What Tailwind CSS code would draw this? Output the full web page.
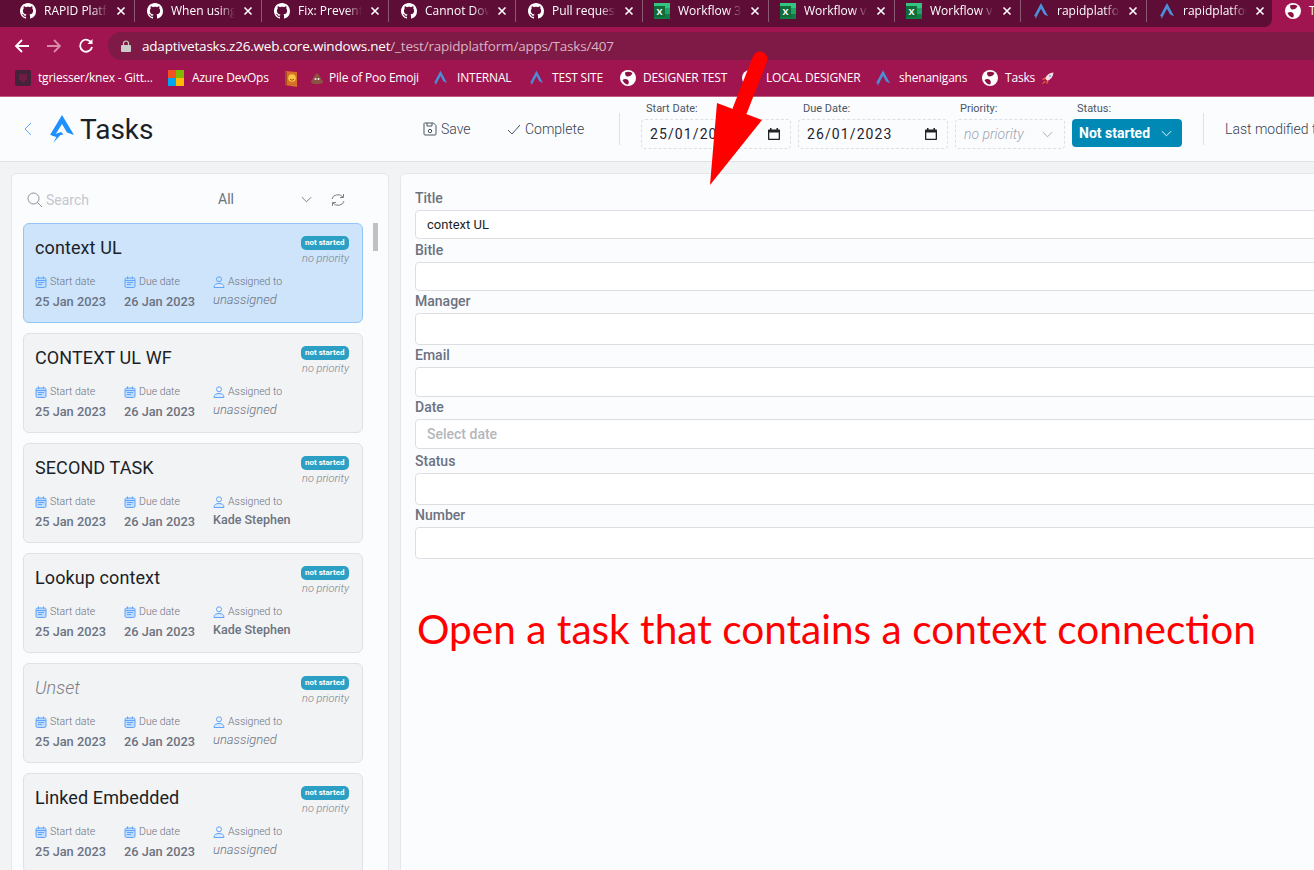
<!DOCTYPE html>
<html lang="en">
<head>
    <meta charset="UTF-8">
    <title>Tasks</title>
    <script src="https://cdn.jsdelivr.net/npm/@tailwindcss/browser@4"></script>
</head>
<body class="relative w-[1314px] h-[870px] overflow-hidden bg-[#f2f3f5] font-['Roboto',sans-serif]">
    <!-- shared icons -->
    <svg class="hidden">
        <symbol id="gh" viewBox="0 0 16 16"><path fill="#fff" d="M8 0C3.58 0 0 3.58 0 8c0 3.54 2.29 6.53 5.47 7.59.4.07.55-.17.55-.38 0-.19-.01-.82-.01-1.49-2.01.37-2.53-.49-2.69-.94-.09-.23-.48-.94-.82-1.13-.28-.15-.68-.52-.01-.53.63-.01 1.08.58 1.23.82.72 1.21 1.87.87 2.33.66.07-.52.28-.87.51-1.07-1.78-.2-3.64-.89-3.64-3.95 0-.87.31-1.59.82-2.15-.08-.2-.36-1.02.08-2.12 0 0 .67-.21 2.2.82.64-.18 1.32-.27 2-.27s1.36.09 2 .27c1.53-1.04 2.2-.82 2.2-.82.44 1.1.16 1.92.08 2.12.51.56.82 1.27.82 2.15 0 3.07-1.87 3.75-3.65 3.95.29.25.54.73.54 1.48 0 1.07-.01 1.93-.01 2.2 0 .21.15.46.55.38A8.01 8.01 0 0 0 16 8c0-4.42-3.58-8-8-8z"/></symbol>
        <symbol id="close" viewBox="0 0 10 10"><path d="M1.500 1.500l7 7M8.500 1.500l-7 7" stroke="#fff" stroke-width="1.600" fill="none"/></symbol>
        <symbol id="rapid" viewBox="0 0 16 18"><path fill="#4a8fd6" d="M8 0l8 15-4.500-2L8 6.500 4.500 13 2 18l-.5-3.500L0 15z"/></symbol>
        <symbol id="globe" viewBox="0 0 16 16"><circle cx="8" cy="8" r="8" fill="#fff"/><path fill="#8a1143" d="M5 2.500c2-1.200 5-1.200 7.500.5-.8 2.500-3 3.500-5 3.500C6 6.500 5 5 5 2.500zM2.500 10c2-1.200 4-1.200 5.500 0 1 1 1 3 .2 4.500-2.500 0-4.700-2-5.700-4.500z"/></symbol>
        <symbol id="cal" viewBox="0 0 12 12"><rect x="1" y="2" width="10" height="9.500" rx="1.500" fill="#bfdbfe" stroke="#60a5fa"/><path d="M3.500.5v2.500M8.500.5v2.500M1 4.500h10M3 6.500h6M3 8.500h4" stroke="#60a5fa" fill="none"/></symbol>
        <symbol id="user" viewBox="0 0 12 12"><circle cx="6" cy="3.300" r="2.500" fill="none" stroke="#60a5fa"/><path d="M1 11.500c0-3 2-4 5-4s5 1 5 4z" fill="#dbeafe" stroke="#60a5fa"/></symbol>
        <symbol id="chev" viewBox="0 0 12 7"><path d="M1 1l5 5 5-5" fill="none" stroke="currentColor" stroke-width="1"/></symbol>
        <symbol id="date" viewBox="0 0 14 14"><path fill="#222" d="M3 1h1.500v1.500h5V1H11v1.500h1c.6 0 1 .4 1 1V12c0 .6-.4 1-1 1H2c-.6 0-1-.4-1-1V3.500c0-.6.4-1 1-1h1zM2.300 5.500V11.700h9.400V5.500z"/></symbol>
    </svg>

    <!-- tab strip -->
    <div class="flex h-[27px] w-full bg-[#a0144f] text-white text-[12px] font-['Open_Sans',sans-serif]">
        <div class="flex w-[1272px] pl-[8px] bg-[#5e0d36] rounded-br-lg overflow-hidden">
            <div class="flex items-center w-[127px] h-[22px] shrink-0 pl-[12px] pr-[8px] gap-[8px] border-r border-[#8a5a72]"><svg class="w-4 h-4 shrink-0"><use href="#gh"/></svg><span class="flex-1 overflow-hidden whitespace-nowrap [mask-image:linear-gradient(to_right,black_75%,transparent)]">RAPID Platform</span><svg class="w-[10px] h-[10px] shrink-0"><use href="#close"/></svg></div>
            <div class="flex items-center w-[127px] h-[22px] shrink-0 pl-[12px] pr-[8px] gap-[8px] border-r border-[#8a5a72]"><svg class="w-4 h-4 shrink-0"><use href="#gh"/></svg><span class="flex-1 overflow-hidden whitespace-nowrap [mask-image:linear-gradient(to_right,black_75%,transparent)]">When using a</span><svg class="w-[10px] h-[10px] shrink-0"><use href="#close"/></svg></div>
            <div class="flex items-center w-[127px] h-[22px] shrink-0 pl-[12px] pr-[8px] gap-[8px] border-r border-[#8a5a72]"><svg class="w-4 h-4 shrink-0"><use href="#gh"/></svg><span class="flex-1 overflow-hidden whitespace-nowrap [mask-image:linear-gradient(to_right,black_75%,transparent)]">Fix: Prevent a</span><svg class="w-[10px] h-[10px] shrink-0"><use href="#close"/></svg></div>
            <div class="flex items-center w-[127px] h-[22px] shrink-0 pl-[12px] pr-[8px] gap-[8px] border-r border-[#8a5a72]"><svg class="w-4 h-4 shrink-0"><use href="#gh"/></svg><span class="flex-1 overflow-hidden whitespace-nowrap [mask-image:linear-gradient(to_right,black_75%,transparent)]">Cannot Down</span><svg class="w-[10px] h-[10px] shrink-0"><use href="#close"/></svg></div>
            <div class="flex items-center w-[127px] h-[22px] shrink-0 pl-[12px] pr-[8px] gap-[8px] border-r border-[#8a5a72]"><svg class="w-4 h-4 shrink-0"><use href="#gh"/></svg><span class="flex-1 overflow-hidden whitespace-nowrap [mask-image:linear-gradient(to_right,black_75%,transparent)]">Pull requests</span><svg class="w-[10px] h-[10px] shrink-0"><use href="#close"/></svg></div>
            <div class="flex items-center w-[126px] h-[22px] shrink-0 pl-[11px] pr-[8px] gap-[8px] border-r border-[#8a5a72]"><span class="flex items-center w-4 h-4 shrink-0 bg-[linear-gradient(#33c481_33%,#21a366_33%_66%,#107c41_66%)]"><span class="flex items-center justify-center w-[11px] h-[11px] bg-[#0f6b3a] text-[9px] font-bold leading-none">X</span></span><span class="flex-1 overflow-hidden whitespace-nowrap [mask-image:linear-gradient(to_right,black_75%,transparent)]">Workflow 3.0</span><svg class="w-[10px] h-[10px] shrink-0"><use href="#close"/></svg></div>
            <div class="flex items-center w-[126px] h-[22px] shrink-0 pl-[11px] pr-[8px] gap-[8px] border-r border-[#8a5a72]"><span class="flex items-center w-4 h-4 shrink-0 bg-[linear-gradient(#33c481_33%,#21a366_33%_66%,#107c41_66%)]"><span class="flex items-center justify-center w-[11px] h-[11px] bg-[#0f6b3a] text-[9px] font-bold leading-none">X</span></span><span class="flex-1 overflow-hidden whitespace-nowrap [mask-image:linear-gradient(to_right,black_75%,transparent)]">Workflow v3</span><svg class="w-[10px] h-[10px] shrink-0"><use href="#close"/></svg></div>
            <div class="flex items-center w-[126px] h-[22px] shrink-0 pl-[11px] pr-[8px] gap-[8px] border-r border-[#8a5a72]"><span class="flex items-center w-4 h-4 shrink-0 bg-[linear-gradient(#33c481_33%,#21a366_33%_66%,#107c41_66%)]"><span class="flex items-center justify-center w-[11px] h-[11px] bg-[#0f6b3a] text-[9px] font-bold leading-none">X</span></span><span class="flex-1 overflow-hidden whitespace-nowrap [mask-image:linear-gradient(to_right,black_75%,transparent)]">Workflow v1</span><svg class="w-[10px] h-[10px] shrink-0"><use href="#close"/></svg></div>
            <div class="flex items-center w-[126px] h-[22px] shrink-0 pl-[12px] pr-[8px] gap-[8px] border-r border-[#8a5a72]"><svg class="w-4 h-4 shrink-0"><use href="#rapid"/></svg><span class="flex-1 overflow-hidden whitespace-nowrap [mask-image:linear-gradient(to_right,black_75%,transparent)]">rapidplatform</span><svg class="w-[10px] h-[10px] shrink-0"><use href="#close"/></svg></div>
            <div class="flex items-center w-[126px] h-[22px] shrink-0 pl-[12px] pr-[8px] gap-[8px]"><svg class="w-4 h-4 shrink-0"><use href="#rapid"/></svg><span class="flex-1 overflow-hidden whitespace-nowrap [mask-image:linear-gradient(to_right,black_75%,transparent)]">rapidplatform</span><svg class="w-[10px] h-[10px] shrink-0"><use href="#close"/></svg></div>
        </div>
        <div class="flex flex-1 items-center h-[22px] pl-[13px] gap-[8px] overflow-hidden"><svg class="w-4 h-4 shrink-0"><use href="#globe"/></svg><span class="whitespace-nowrap">Tasks</span></div>
    </div>

    <!-- address bar -->
    <div class="flex items-center h-[33px] bg-[#a0144f]">
        <div class="flex items-center w-[108px] mt-[5px] pl-[14px] gap-[16px]">
            <svg class="w-4 h-4 shrink-0" viewBox="0 0 16 16"><path d="M15 8H2M8 2L2 8l6 6" fill="none" stroke="#fff" stroke-width="1.800"/></svg>
            <svg class="w-4 h-4 shrink-0" viewBox="0 0 16 16"><path d="M1 8h13M8 2l6 6-6 6" fill="none" stroke="#d98aa8" stroke-width="1.800"/></svg>
            <svg class="w-4 h-4 shrink-0" viewBox="0 0 16 16"><path d="M13.500 5A6 6 0 1 0 14 9" fill="none" stroke="#fff" stroke-width="1.800"/><path d="M14.500 1v5h-5z" fill="#fff"/></svg>
        </div>
        <div class="flex flex-1 items-center h-[28px] mt-[5px] pl-[13px] gap-[11px] bg-[#7e1a45] rounded-l-[14px] text-[13.5px] font-['Open_Sans',sans-serif] tracking-[-0.2px]">
            <svg class="w-[10px] h-[12px]" viewBox="0 0 10 12"><path d="M2.500 5V3.500a2.500 2.500 0 0 1 5 0V5" fill="none" stroke="#ccb" stroke-width="1.200"/><rect y="5" width="10" height="7" rx="1" fill="#ccc"/></svg>
            <span class="text-white whitespace-nowrap">adaptivetasks.z26.web.core.windows.net<span class="text-[#d9b3c4]">/_test/rapidplatform/apps/Tasks/407</span></span>
        </div>
    </div>

    <!-- bookmarks -->
    <div class="flex items-center h-[37px] pl-[15px] bg-[#a0144f] border-b border-[#c05c84] text-white text-[12px] font-['Open_Sans',sans-serif] tracking-[-0.2px] whitespace-nowrap">
        <span class="flex items-center w-[153px] gap-[7px]"><svg class="w-4 h-4" viewBox="0 0 16 16"><rect width="16" height="16" rx="2" fill="#43223a"/><path d="M5 4v6M7 4v8M9 4v8M11 4v6" stroke="#a0144f" stroke-width="1"/></svg>tgriesser/knex - Gitt...</span>
        <span class="flex items-center w-[116px] gap-[8px]"><span class="grid grid-cols-2 w-4 h-4"><i class="bg-[#f25022]"></i><i class="bg-[#7fba00]"></i><i class="bg-[#00a4ef]"></i><i class="bg-[#ffb900]"></i></span>Azure DevOps</span>
        <span class="flex items-center w-[150px] gap-[6px]">
            <svg class="w-[14px] h-[17px]" viewBox="0 0 14 17"><path d="M1 1l12 1v15L1 15z" fill="#d8702a"/><path d="M1 1v14l2 1V2z" fill="#a84a1e"/><circle cx="8" cy="8" r="3.800" fill="#f4c542"/><path d="M6 9c1 1.500 3 1.500 4 0" stroke="#a84a1e" fill="none"/></svg>
            <svg class="w-[12px] h-[11px] ml-[7px]" viewBox="0 0 12 11"><path d="M6 0c1 1 2.500 1.500 2.500 3.500C10 4.500 10.500 5.500 10.500 6.500 11.500 7 12 8 12 9c0 1.500-2 2-6 2s-6-.5-6-2c0-1 .5-2 1.500-2.500 0-1 .5-2 2-3C3.500 1.500 5 1 6 0z" fill="#8a5442"/><circle cx="4.500" cy="6" r="1" fill="#eee"/><circle cx="7.500" cy="6" r="1" fill="#eee"/></svg>
            Pile of Poo Emoji</span>
        <span class="flex items-center w-[96px] gap-[10px]"><svg class="w-[13px] h-4"><use href="#rapid"/></svg>INTERNAL</span>
        <span class="flex items-center w-[90px] gap-[9px]"><svg class="w-[13px] h-4"><use href="#rapid"/></svg>TEST SITE</span>
        <span class="flex items-center w-[122px] gap-[7px]"><svg class="w-4 h-4"><use href="#globe"/></svg>DESIGNER TEST</span>
        <span class="flex items-center w-[134px] gap-[8px]"><svg class="w-4 h-4"><use href="#globe"/></svg>LOCAL DESIGNER</span>
        <span class="flex items-center w-[106px] gap-[9px]"><svg class="w-[14px] h-4"><use href="#rapid"/></svg>shenanigans</span>
        <span class="flex items-center gap-[7px]"><svg class="w-4 h-4"><use href="#globe"/></svg>Tasks
            <svg class="w-[13px] h-[13px] -ml-[1px]" viewBox="0 0 13 13"><path d="M12.500.5C8.500.8 5.500 3 4 6.500L6.500 9c3.500-1.500 5.700-4.500 6-8.500z" fill="#f6dfe4"/><path d="M4.500 5.500L2 6l-1 2 3-.5zM7.500 8.500L7 11l-2 1 .5-3z" fill="#e8504a"/><path d="M3.500 9L.5 12.500 4.500 10z" fill="#f0803c"/><circle cx="9" cy="4" r="1" fill="#6aa8d8"/></svg></span>
    </div>

    <!-- page header -->
    <header class="flex items-center h-[65px] bg-[#fbfcfe] border-b border-[#e0e1e3] overflow-hidden">
        <svg class="w-[8px] h-[14px] ml-[24px] shrink-0" viewBox="0 0 8 14"><path d="M7 1L1 7l6 6" fill="none" stroke="#60a5fa" stroke-width="1"/></svg>
        <svg class="w-[24px] h-[28px] ml-[18px] shrink-0" viewBox="0 0 24 28"><path fill="#1e90ff" d="M12 0l12 20-7-2.500L12 9l-5 8-2 3H0z"/><path fill="#1e90ff" d="M1 20.500l10-3.500 2.500 2.500-3 .5L3 28l3.500-6z"/></svg>
        <span class="w-[343px] ml-[6px] pt-[2px] shrink-0 text-[28px] text-[#1b1f27]">Tasks</span>
        <span class="flex items-center w-[84px] gap-[4px] shrink-0 text-[14px] font-light text-[#374151]"><svg class="w-[14px] h-[14px] shrink-0" viewBox="0 0 14 14"><path d="M1.500 1h9l2.500 2.500V12a1 1 0 0 1-1 1H2a1 1 0 0 1-1-1V1.500zM4 1v3h5V1" fill="none" stroke="#4b5563"/><circle cx="7" cy="9" r="1.700" fill="none" stroke="#4b5563"/></svg>Save</span>
        <span class="flex items-center w-[112px] gap-[4px] shrink-0 text-[14px] font-light text-[#374151]"><svg class="w-[14px] h-[11px] shrink-0" viewBox="0 0 14 11"><path d="M1 6l4 4 8-9" fill="none" stroke="#4b5563"/></svg>Complete</span>
        <span class="w-px h-[32px] shrink-0 bg-[#dfe1e5] mr-[21px]"></span>
        <div class="flex gap-[7px] mb-[6px] shrink-0">
            <div class="w-[150px]">
                <p class="pl-[5px] h-[16px] text-[11px] leading-[12px] text-[#4b5563]">Start Date:</p>
                <div class="flex items-center justify-between h-[30px] pl-[8px] pr-[9px] border border-dashed border-[#dcdfe4] rounded text-[14px] tracking-[1.1px] text-[#1e2430]">25/01/2023<svg class="w-[14px] h-[14px]"><use href="#date"/></svg></div>
            </div>
            <div class="w-[150px]">
                <p class="pl-[5px] h-[16px] text-[11px] leading-[12px] text-[#4b5563]">Due Date:</p>
                <div class="flex items-center justify-between h-[30px] pl-[8px] pr-[9px] border border-dashed border-[#dcdfe4] rounded text-[14px] tracking-[1.1px] text-[#1e2430]">26/01/2023<svg class="w-[14px] h-[14px]"><use href="#date"/></svg></div>
            </div>
            <div class="w-[110px]">
                <p class="pl-[5px] h-[16px] text-[11px] leading-[12px] text-[#4b5563]">Priority:</p>
                <div class="flex items-center justify-between h-[30px] pl-[8px] pr-[11px] border border-dashed border-[#dcdfe4] rounded text-[14px] italic font-light text-[#9ca3af]">no priority<svg class="w-[11px] h-[7px]"><use href="#chev"/></svg></div>
            </div>
            <div class="w-[110px]">
                <p class="pl-[5px] h-[16px] text-[11px] leading-[12px] text-[#4b5563]">Status:</p>
                <div class="flex items-center justify-between h-[28px] pl-[7px] pr-[10px] bg-[#0089b5] rounded text-[14px] font-bold text-white">Not started<svg class="w-[11px] h-[7px]"><use href="#chev"/></svg></div>
            </div>
        </div>
        <span class="w-px h-[32px] ml-[21px] bg-[#dfe1e5] shrink-0"></span>
        <span class="ml-[21px] shrink-0 text-[14px] font-light text-[#374151] whitespace-nowrap">Last modified today</span>
    </header>

    <main class="flex pt-[11px] pl-[11px] gap-[11px]">
        <!-- task list -->
        <aside class="relative w-[378px] h-[720px] shrink-0 pt-[7px] px-[11px] bg-[#fbfcfe] border border-[#e6e7ea] rounded-md overflow-hidden">
            <div class="flex items-center h-[38px] text-[14px]">
                <svg class="w-[16px] h-[16px] ml-[4px]" viewBox="0 0 16 16"><circle cx="6.500" cy="6.500" r="5.500" fill="none" stroke="#8b8f96"/><path d="M10.500 10.500L15 15" stroke="#8b8f96"/></svg>
                <span class="w-[172px] ml-[3px] text-[#c4c7cc]">Search</span>
                <span class="w-[83px] -mt-[2px] text-[#6b7280]">All</span>
                <svg class="w-[11px] h-[7px] -mt-[2px] text-[#6b7280]"><use href="#chev"/></svg>
                <svg class="w-[14px] h-[14px] ml-[19px]" viewBox="0 0 14 14"><path d="M1 6a6 5 0 0 1 11-2M13 8a6 5 0 0 1-11 2M12.500 1v3.500H9M1.500 13V9.500H5" fill="none" stroke="#7b8088"/></svg>
            </div>
            <div class="flex flex-col gap-[10px] w-[340px] mt-[4px]">
                <article class="relative h-[100px] shrink-0 pt-[12px] pl-[11px] bg-[#cde4fb] border border-[#93c5f5] rounded-md">
                    <h3 class="h-[24px] text-[18px] leading-[24px] tracking-[0.1px] text-[#1b1f27]">context UL</h3>
                    <div class="absolute top-[12px] right-[13px] flex flex-col items-end"><span class="flex items-center h-[14px] px-[4.500px] bg-[#2b9fc4] rounded-[5px] text-[8px] font-bold text-white">not started</span><span class="mt-[2px] text-[11px] leading-[14px] italic font-light text-[#7b8088]">no priority</span></div>
                    <div class="grid grid-cols-[89px_89px_1fr] mt-[15px]">
                        <div><p class="flex items-center gap-[3px] h-[14px] text-[10.500px] font-light text-[#6b7280]"><svg class="w-[12px] h-[12px]"><use href="#cal"/></svg>Start date</p><p class="mt-[5px] text-[12.750px] font-medium leading-[16px] text-[#6b7280]">25 Jan 2023</p></div>
                        <div><p class="flex items-center gap-[3px] h-[14px] text-[10.500px] font-light text-[#6b7280]"><svg class="w-[12px] h-[12px]"><use href="#cal"/></svg>Due date</p><p class="mt-[5px] text-[12.750px] font-medium leading-[16px] text-[#6b7280]">26 Jan 2023</p></div>
                        <div><p class="flex items-center gap-[3px] h-[14px] text-[10.500px] font-light text-[#6b7280]"><svg class="w-[12px] h-[12px]"><use href="#user"/></svg>Assigned to</p><p class="mt-[3px] text-[13px] italic font-light leading-[16px] text-[#6b7280]">unassigned</p></div>
                    </div>
                </article>
                <article class="relative h-[100px] shrink-0 pt-[12px] pl-[11px] bg-[#f2f3f5] border border-[#e0e1e4] rounded-md">
                    <h3 class="h-[24px] text-[18px] leading-[24px] tracking-[0.1px] text-[#1b1f27]">CONTEXT UL WF</h3>
                    <div class="absolute top-[12px] right-[13px] flex flex-col items-end"><span class="flex items-center h-[14px] px-[4.500px] bg-[#2b9fc4] rounded-[5px] text-[8px] font-bold text-white">not started</span><span class="mt-[2px] text-[11px] leading-[14px] italic font-light text-[#7b8088]">no priority</span></div>
                    <div class="grid grid-cols-[89px_89px_1fr] mt-[15px]">
                        <div><p class="flex items-center gap-[3px] h-[14px] text-[10.500px] font-light text-[#6b7280]"><svg class="w-[12px] h-[12px]"><use href="#cal"/></svg>Start date</p><p class="mt-[5px] text-[12.750px] font-medium leading-[16px] text-[#6b7280]">25 Jan 2023</p></div>
                        <div><p class="flex items-center gap-[3px] h-[14px] text-[10.500px] font-light text-[#6b7280]"><svg class="w-[12px] h-[12px]"><use href="#cal"/></svg>Due date</p><p class="mt-[5px] text-[12.750px] font-medium leading-[16px] text-[#6b7280]">26 Jan 2023</p></div>
                        <div><p class="flex items-center gap-[3px] h-[14px] text-[10.500px] font-light text-[#6b7280]"><svg class="w-[12px] h-[12px]"><use href="#user"/></svg>Assigned to</p><p class="mt-[3px] text-[13px] italic font-light leading-[16px] text-[#6b7280]">unassigned</p></div>
                    </div>
                </article>
                <article class="relative h-[100px] shrink-0 pt-[12px] pl-[11px] bg-[#f2f3f5] border border-[#e0e1e4] rounded-md">
                    <h3 class="h-[24px] text-[18px] leading-[24px] tracking-[0.1px] text-[#1b1f27]">SECOND TASK</h3>
                    <div class="absolute top-[12px] right-[13px] flex flex-col items-end"><span class="flex items-center h-[14px] px-[4.500px] bg-[#2b9fc4] rounded-[5px] text-[8px] font-bold text-white">not started</span><span class="mt-[2px] text-[11px] leading-[14px] italic font-light text-[#7b8088]">no priority</span></div>
                    <div class="grid grid-cols-[89px_89px_1fr] mt-[15px]">
                        <div><p class="flex items-center gap-[3px] h-[14px] text-[10.500px] font-light text-[#6b7280]"><svg class="w-[12px] h-[12px]"><use href="#cal"/></svg>Start date</p><p class="mt-[5px] text-[12.750px] font-medium leading-[16px] text-[#6b7280]">25 Jan 2023</p></div>
                        <div><p class="flex items-center gap-[3px] h-[14px] text-[10.500px] font-light text-[#6b7280]"><svg class="w-[12px] h-[12px]"><use href="#cal"/></svg>Due date</p><p class="mt-[5px] text-[12.750px] font-medium leading-[16px] text-[#6b7280]">26 Jan 2023</p></div>
                        <div><p class="flex items-center gap-[3px] h-[14px] text-[10.500px] font-light text-[#6b7280]"><svg class="w-[12px] h-[12px]"><use href="#user"/></svg>Assigned to</p><p class="mt-[3px] text-[12.500px] font-medium leading-[16px] text-[#6b7280]">Kade Stephen</p></div>
                    </div>
                </article>
                <article class="relative h-[100px] shrink-0 pt-[12px] pl-[11px] bg-[#f2f3f5] border border-[#e0e1e4] rounded-md">
                    <h3 class="h-[24px] text-[18px] leading-[24px] tracking-[0.1px] text-[#1b1f27]">Lookup context</h3>
                    <div class="absolute top-[12px] right-[13px] flex flex-col items-end"><span class="flex items-center h-[14px] px-[4.500px] bg-[#2b9fc4] rounded-[5px] text-[8px] font-bold text-white">not started</span><span class="mt-[2px] text-[11px] leading-[14px] italic font-light text-[#7b8088]">no priority</span></div>
                    <div class="grid grid-cols-[89px_89px_1fr] mt-[15px]">
                        <div><p class="flex items-center gap-[3px] h-[14px] text-[10.500px] font-light text-[#6b7280]"><svg class="w-[12px] h-[12px]"><use href="#cal"/></svg>Start date</p><p class="mt-[5px] text-[12.750px] font-medium leading-[16px] text-[#6b7280]">25 Jan 2023</p></div>
                        <div><p class="flex items-center gap-[3px] h-[14px] text-[10.500px] font-light text-[#6b7280]"><svg class="w-[12px] h-[12px]"><use href="#cal"/></svg>Due date</p><p class="mt-[5px] text-[12.750px] font-medium leading-[16px] text-[#6b7280]">26 Jan 2023</p></div>
                        <div><p class="flex items-center gap-[3px] h-[14px] text-[10.500px] font-light text-[#6b7280]"><svg class="w-[12px] h-[12px]"><use href="#user"/></svg>Assigned to</p><p class="mt-[3px] text-[12.500px] font-medium leading-[16px] text-[#6b7280]">Kade Stephen</p></div>
                    </div>
                </article>
                <article class="relative h-[100px] shrink-0 pt-[12px] pl-[11px] bg-[#f2f3f5] border border-[#e0e1e4] rounded-md">
                    <h3 class="h-[24px] text-[18px] leading-[24px] tracking-[0.1px] italic font-light text-[#7b8088]">Unset</h3>
                    <div class="absolute top-[12px] right-[13px] flex flex-col items-end"><span class="flex items-center h-[14px] px-[4.500px] bg-[#2b9fc4] rounded-[5px] text-[8px] font-bold text-white">not started</span><span class="mt-[2px] text-[11px] leading-[14px] italic font-light text-[#7b8088]">no priority</span></div>
                    <div class="grid grid-cols-[89px_89px_1fr] mt-[15px]">
                        <div><p class="flex items-center gap-[3px] h-[14px] text-[10.500px] font-light text-[#6b7280]"><svg class="w-[12px] h-[12px]"><use href="#cal"/></svg>Start date</p><p class="mt-[5px] text-[12.750px] font-medium leading-[16px] text-[#6b7280]">25 Jan 2023</p></div>
                        <div><p class="flex items-center gap-[3px] h-[14px] text-[10.500px] font-light text-[#6b7280]"><svg class="w-[12px] h-[12px]"><use href="#cal"/></svg>Due date</p><p class="mt-[5px] text-[12.750px] font-medium leading-[16px] text-[#6b7280]">26 Jan 2023</p></div>
                        <div><p class="flex items-center gap-[3px] h-[14px] text-[10.500px] font-light text-[#6b7280]"><svg class="w-[12px] h-[12px]"><use href="#user"/></svg>Assigned to</p><p class="mt-[3px] text-[13px] italic font-light leading-[16px] text-[#6b7280]">unassigned</p></div>
                    </div>
                </article>
                <article class="relative h-[100px] shrink-0 pt-[12px] pl-[11px] bg-[#f2f3f5] border border-[#e0e1e4] rounded-md">
                    <h3 class="h-[24px] text-[18px] leading-[24px] tracking-[0.1px] text-[#1b1f27]">Linked Embedded</h3>
                    <div class="absolute top-[12px] right-[13px] flex flex-col items-end"><span class="flex items-center h-[14px] px-[4.500px] bg-[#2b9fc4] rounded-[5px] text-[8px] font-bold text-white">not started</span><span class="mt-[2px] text-[11px] leading-[14px] italic font-light text-[#7b8088]">no priority</span></div>
                    <div class="grid grid-cols-[89px_89px_1fr] mt-[15px]">
                        <div><p class="flex items-center gap-[3px] h-[14px] text-[10.500px] font-light text-[#6b7280]"><svg class="w-[12px] h-[12px]"><use href="#cal"/></svg>Start date</p><p class="mt-[5px] text-[12.750px] font-medium leading-[16px] text-[#6b7280]">25 Jan 2023</p></div>
                        <div><p class="flex items-center gap-[3px] h-[14px] text-[10.500px] font-light text-[#6b7280]"><svg class="w-[12px] h-[12px]"><use href="#cal"/></svg>Due date</p><p class="mt-[5px] text-[12.750px] font-medium leading-[16px] text-[#6b7280]">26 Jan 2023</p></div>
                        <div><p class="flex items-center gap-[3px] h-[14px] text-[10.500px] font-light text-[#6b7280]"><svg class="w-[12px] h-[12px]"><use href="#user"/></svg>Assigned to</p><p class="mt-[3px] text-[13px] italic font-light leading-[16px] text-[#6b7280]">unassigned</p></div>
                    </div>
                </article>
            </div>
            <!-- scrollbar -->
            <div class="absolute top-[49px] right-[10px] w-[5px] h-[28px] bg-[#c1c1c1]"></div>
        </aside>

        <!-- form -->
        <section class="w-[1000px] h-[720px] shrink-0 pt-[15px] pl-[14px] bg-[#fbfcfe] border border-[#e6e7ea] rounded-md text-[14px] text-[#6b7280] font-medium">
            <label class="block h-[21px] leading-[19px]">Title</label>
            <div class="flex items-center h-[29px] pl-[11px] bg-white border border-[#dcdee2] rounded-sm text-[13px] font-normal text-[#1b1f27]">context UL</div>
            <label class="block h-[23px] leading-[22px]">Bitle</label>
            <div class="h-[29px] bg-white border border-[#dcdee2] rounded-sm"></div>
            <label class="block h-[22px] leading-[20px]">Manager</label>
            <div class="h-[32px] bg-white border border-[#dcdee2] rounded-sm"></div>
            <label class="block h-[22px] leading-[20px]">Email</label>
            <div class="h-[30px] bg-white border border-[#dcdee2] rounded-sm"></div>
            <label class="block h-[22px] leading-[20px]">Date</label>
            <div class="flex items-center h-[30px] pl-[11px] bg-white border border-[#dcdee2] rounded-sm text-[#b4b7bc]">Select date</div>
            <label class="block h-[24px] leading-[24px]">Status</label>
            <div class="h-[32px] bg-white border border-[#dcdee2] rounded-sm"></div>
            <label class="block h-[22px] leading-[20px]">Number</label>
            <div class="h-[32px] bg-white border border-[#dcdee2] rounded-sm"></div>
        </section>
    </main>

    <!-- annotation drawn over the page -->
    <svg class="absolute top-0 left-0 w-[1314px] h-[300px] pointer-events-none" viewBox="0 0 1314 300">
        <path d="M760 59L740 110" stroke="#ff0000" stroke-width="15" stroke-linecap="round" fill="none"/>
        <path d="M717 103L762 120L710 185z" fill="#ff0000"/>
    </svg>
    <p class="absolute left-[417px] top-[604px] text-[40.600px] leading-[50px] text-[#ff0000] whitespace-nowrap font-['Lato',sans-serif]">Open a task that contains a context connection</p>
</body>
</html>
